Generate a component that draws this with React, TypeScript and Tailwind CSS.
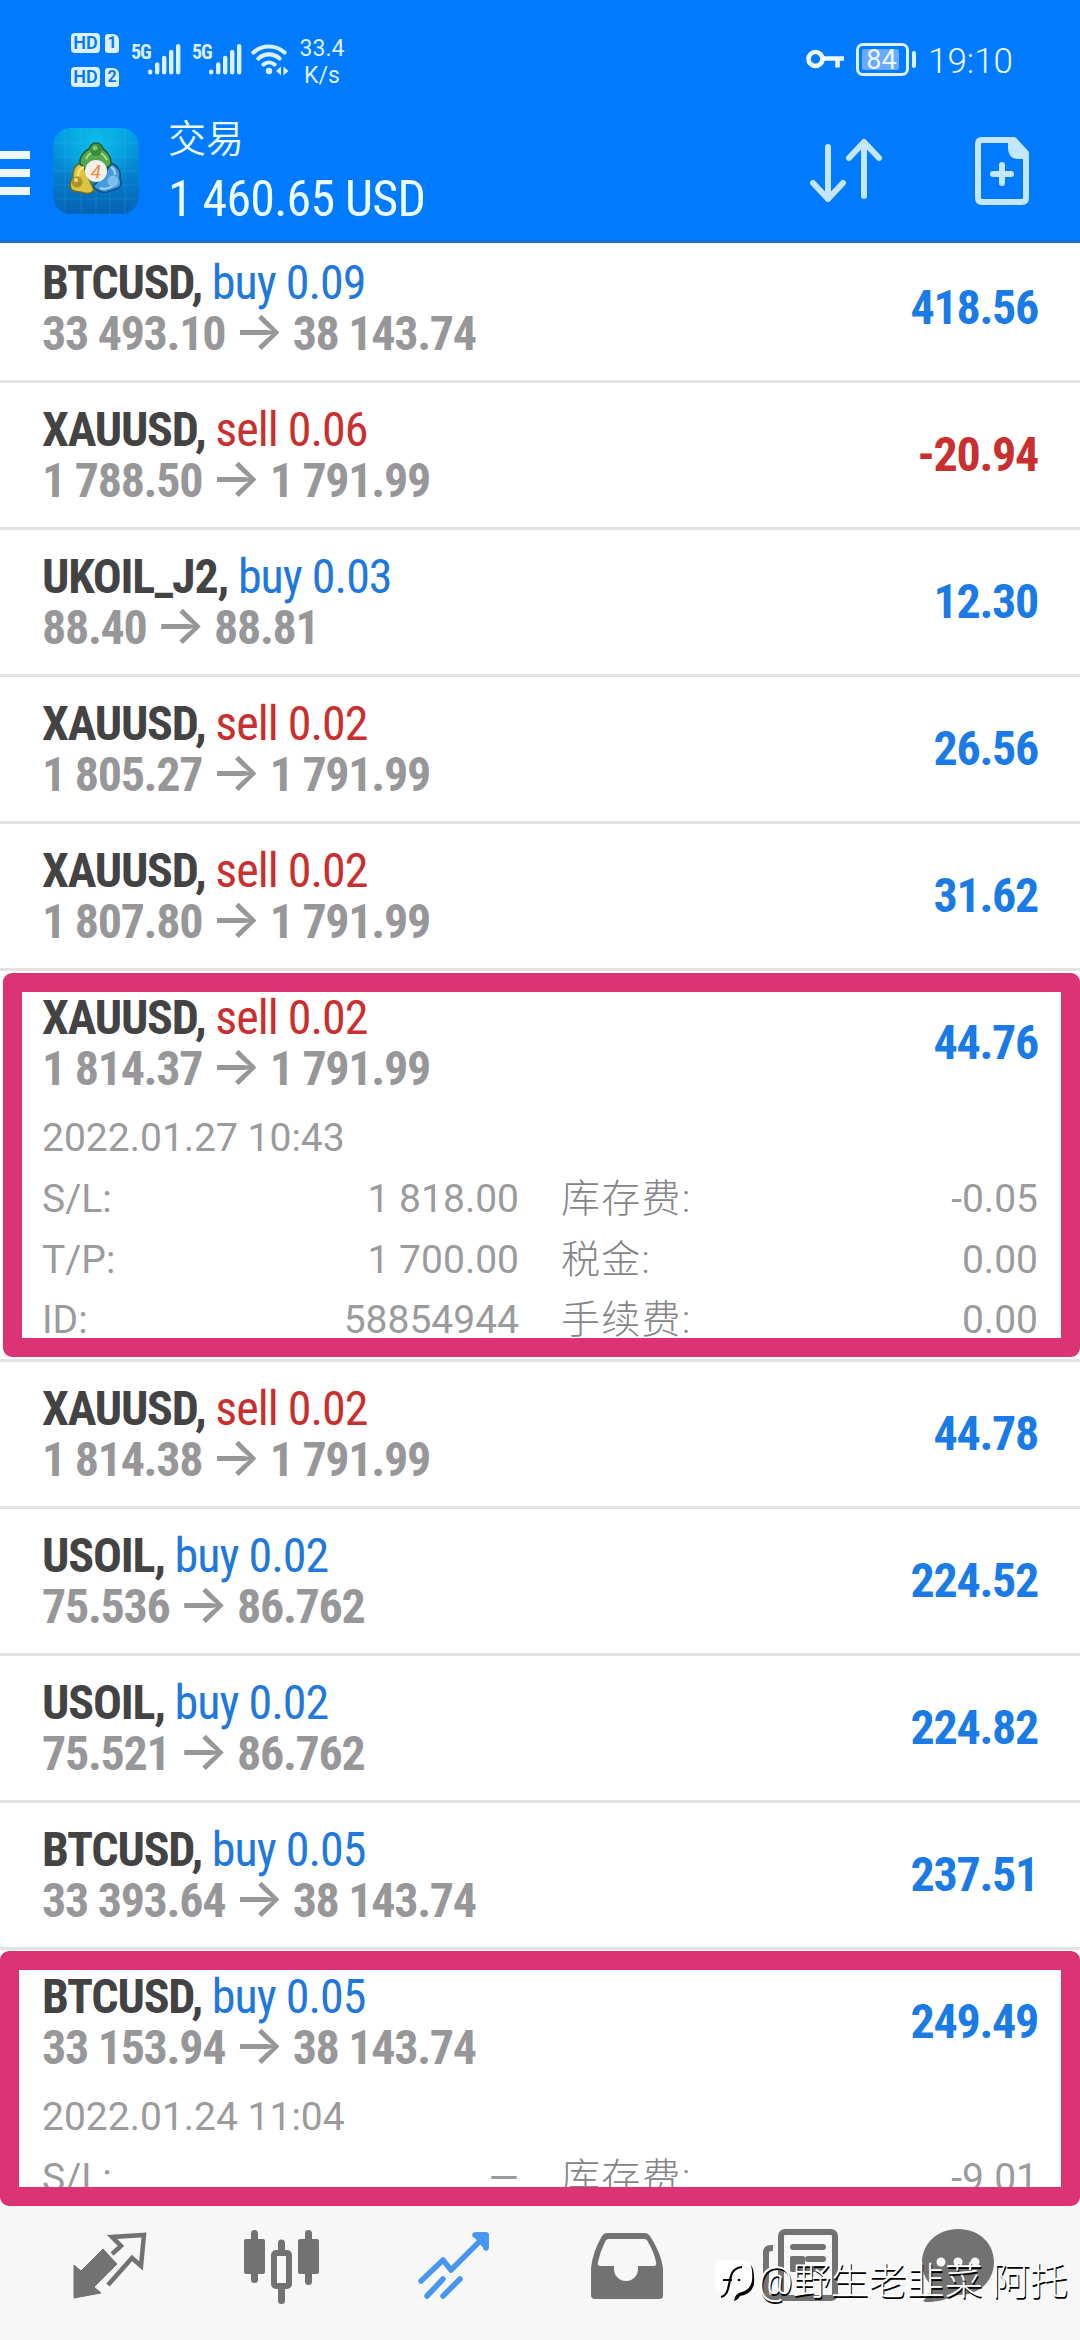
import React from 'react';

type Side = 'buy' | 'sell';

interface Details {
  time: string;
  sl: string;
  tp: string;
  id: string;
  swap: string;
  tax: string;
  fee: string;
}

interface Position {
  symbol: string;
  side: Side;
  lots: string;
  open: string;
  current: string;
  profit: string;
  details?: Details;
}

const positions: Position[] = [
  { symbol: 'BTCUSD', side: 'buy', lots: '0.09', open: '33 493.10', current: '38 143.74', profit: '418.56' },
  { symbol: 'XAUUSD', side: 'sell', lots: '0.06', open: '1 788.50', current: '1 791.99', profit: '-20.94' },
  { symbol: 'UKOIL_J2', side: 'buy', lots: '0.03', open: '88.40', current: '88.81', profit: '12.30' },
  { symbol: 'XAUUSD', side: 'sell', lots: '0.02', open: '1 805.27', current: '1 791.99', profit: '26.56' },
  { symbol: 'XAUUSD', side: 'sell', lots: '0.02', open: '1 807.80', current: '1 791.99', profit: '31.62' },
  {
    symbol: 'XAUUSD', side: 'sell', lots: '0.02', open: '1 814.37', current: '1 791.99', profit: '44.76',
    details: { time: '2022.01.27 10:43', sl: '1 818.00', tp: '1 700.00', id: '58854944', swap: '-0.05', tax: '0.00', fee: '0.00' },
  },
  { symbol: 'XAUUSD', side: 'sell', lots: '0.02', open: '1 814.38', current: '1 791.99', profit: '44.78' },
  { symbol: 'USOIL', side: 'buy', lots: '0.02', open: '75.536', current: '86.762', profit: '224.52' },
  { symbol: 'USOIL', side: 'buy', lots: '0.02', open: '75.521', current: '86.762', profit: '224.82' },
  { symbol: 'BTCUSD', side: 'buy', lots: '0.05', open: '33 393.64', current: '38 143.74', profit: '237.51' },
  {
    symbol: 'BTCUSD', side: 'buy', lots: '0.05', open: '33 153.94', current: '38 143.74', profit: '249.49',
    details: { time: '2022.01.24 11:04', sl: '—', tp: '—', id: '', swap: '-9.01', tax: '', fee: '' },
  },
];

function SimBadge({ slot }: { slot: string }) {
  return (
    <div className="flex items-center gap-[5px] text-[#007aff] font-bold leading-none">
      <span className="w-[29px] h-5 rounded-[4px] bg-[#dcf1ff] flex items-center justify-center text-[18px] font-semibold">HD</span>
      <span className="w-[14px] h-[19px] rounded-[3px] rounded-tr-[6px] bg-[#dcf1ff] flex items-center justify-center text-[16px]">{slot}</span>
    </div>
  );
}

function Signal() {
  return (
    <div className="flex items-start">
      <span className="w-[17px] text-[20px] leading-[18px] font-bold tracking-[-1px] [font-stretch:75%]">5G</span>
      <svg width="33" height="32" viewBox="0 0 33 32" stroke="#dcf1ff" strokeWidth="4.4" strokeLinecap="round">
        <path d="M2.2 28.6v.6M9.2 21.5v7.7M16.2 15v14.2M23.2 9v20.2M30.2 3.2v26" />
      </svg>
    </div>
  );
}

function StatusBar() {
  return (
    <div className="h-[118px] flex items-start pl-[71px] pr-[72px] text-[#dcf1ff]">
      <div className="flex flex-col gap-[14px] mt-[33px]">
        <SimBadge slot="1" />
        <SimBadge slot="2" />
      </div>
      <div className="flex gap-[11px] mt-[43px] ml-3">
        <Signal />
        <Signal />
      </div>
      <svg className="mt-[43px] ml-[9px]" width="38" height="33" viewBox="0 0 38 33" fill="none" stroke="#dcf1ff" strokeWidth="4.2" strokeLinecap="round">
        <path d="M2.5 9.5a23 23 0 0 1 31 0M7.5 15.5a15.5 15.5 0 0 1 21 0M12.5 21.5a8.5 8.5 0 0 1 11 0" />
        <circle cx="18" cy="28" r="3.2" fill="#dcf1ff" stroke="none" />
        <path d="M25 28l5-4.5v9zM37.5 28l-5-4.5v9z" fill="#dcf1ff" stroke="none" />
      </svg>
      <div className="mt-[35px] ml-[9px] w-[48px] text-center text-[23px] leading-[27px]">
        <div>33.4</div>
        <div>K/s</div>
      </div>
      <div className="ml-auto flex items-center mt-[38px] h-[42px]">
        <svg width="39" height="20" viewBox="0 0 39 20" fill="none" stroke="#eefaff" strokeWidth="4.6">
          <circle cx="9.5" cy="10" r="7" />
          <path d="M17 9.500h21M31.5 9v9.500" />
        </svg>
        <div className="relative ml-[11px] w-[53px] h-[33px] rounded-[7px] border-[3px] border-[#dcf1ff] flex items-center justify-center">
          <div className="absolute left-[3px] top-[3px] bottom-[3px] w-[37px] rounded-[2px] bg-[#69a9ff]" />
          <span className="relative pt-[3px] pr-[2px] text-[27px] leading-none text-[#eefaff]">84</span>
        </div>
        <div className="ml-[3px] w-1 h-[17px] rounded-[2px] bg-[#dcf1ff]" />
        <span className="ml-3 mt-[5px] w-[80px] text-[35px] leading-none font-light text-[#eefaff]">19:10</span>
      </div>
    </div>
  );
}

function AppLogo() {
  return (
    <svg width="86" height="86" viewBox="0 0 86 86">
      <defs>
        <linearGradient id="bg" x1="0" y1="0" x2="0" y2="1">
          <stop offset="0" stopColor="#00a0e6" />
          <stop offset="0.5" stopColor="#0583cf" />
          <stop offset="1" stopColor="#0562b4" />
        </linearGradient>
        <radialGradient id="glow" cx="0.5" cy="0.2" r="0.5">
          <stop offset="0" stopColor="#10c8ea" stopOpacity="0.8" />
          <stop offset="1" stopColor="#10c8ea" stopOpacity="0" />
        </radialGradient>
      </defs>
      <rect width="86" height="86" rx="18" fill="url(#bg)" />
      <rect width="86" height="86" rx="18" fill="url(#glow)" />
      <path d="M0 15h86M0 29h86M0 43h86M0 57h86M0 71h86M12 0v86M28 0v86M43 0v86M57 0v86M72 0v86" stroke="#4fc0f0" strokeOpacity="0.2" strokeWidth="1" />
      <g strokeLinejoin="round">
        <path d="M58 35c7 3 10 9 9 16 2 4 1 8-2 9-4 2-7 2-11 4-5 1-11-1-14-6l11-10z" fill="#459bdd" stroke="#124c86" strokeWidth="1.5" />
        <path d="M29 35c-7 1-10 8-9 15-3 3-4 9-1 12 5 3 9 1 12 3 4 1 8 0 10-3l-6-13z" fill="#dcc541" stroke="#6d6a22" strokeWidth="1.5" />
        <path d="M43 15c-4 0-6 3-7 6-6 3-10 9-9 15l8 6h15l8-5c1-7-3-13-8-16-1-4-3-6-7-6z" fill="#55a84c" stroke="#1d5a3a" strokeWidth="1.5" />
      </g>
      <path d="M33 31q3-7 10-7t11 8" fill="none" stroke="#a9dc8c" strokeWidth="2" />
      <path d="M25 48q0-7 6-9" fill="none" stroke="#f7ed8c" strokeWidth="2" />
      <path d="M47 60q6 2 13-2M62 47q0-6-4-8" fill="none" stroke="#a8dbfa" strokeWidth="2" />
      <circle cx="43" cy="22" r="6" fill="#3c8c3e" />
      <circle cx="42" cy="20" r="2.5" fill="#7fc873" />
      <circle cx="24" cy="54" r="5.5" fill="#ad9128" />
      <circle cx="23" cy="52" r="2" fill="#eee07c" />
      <circle cx="60" cy="53" r="5.5" fill="#7dbdf0" />
      <circle cx="43" cy="43" r="11" fill="#f5efec" />
      <text x="43" y="49.5" textAnchor="middle" fontSize="19" fontStyle="italic" fill="#f08a3c">4</text>
    </svg>
  );
}

function Header() {
  return (
    <header className="h-[243px] shrink-0 bg-[#007aff] border-b-[3px] border-[#1a6fcb]">
      <StatusBar />
      <div className="flex items-start h-[122px]">
        <div className="flex flex-col gap-[10px] mt-[33px] w-[30px]">
          <div className="h-2 bg-[#ecfaff]" />
          <div className="h-2 bg-[#ecfaff]" />
          <div className="h-2 bg-[#ecfaff]" />
        </div>
        <div className="ml-[23px] mt-[10px]">
          <AppLogo />
        </div>
        <div className="ml-[29px] text-[#ecfcff] whitespace-nowrap">
          <div className="text-[38px] leading-[40px] mt-[1px]">
            <span className="font-[350]">交易</span>
          </div>
          <div className="text-[50px] leading-[58px] mt-[11px] tracking-[-0.8px] [font-stretch:75%]">1 460.65 USD</div>
        </div>
        <svg className="ml-auto mt-[19px]" width="76" height="68" viewBox="0 0 76 68" fill="none" stroke="#c4e6ff" strokeWidth="6" strokeLinecap="round" strokeLinejoin="round">
          <path d="M19 10v52M4 46l15 16 15-16M55 59V6M40 21L55 5l15 16" />
        </svg>
        <svg className="ml-[90px] mr-[51px] mt-[19px]" width="54" height="68" viewBox="0 0 54 68" fill="none" stroke="#c4e6ff" strokeWidth="6">
          <path d="M6 3h33l12 13v45q0 4-4 4H7q-4 0-4-4V7q0-4 4-4z" strokeLinejoin="round" />
          <path d="M33 4v7q0 10 9 11h9V14L41 4z" fill="#c4e6ff" stroke="none" />
          <path d="M27 28v18M18 37h18" strokeLinecap="round" />
        </svg>
      </div>
    </header>
  );
}

function DetailRow({ label, value }: { label: string; value: string }) {
  return (
    <div className="flex justify-between h-[60.5px]">
      <span>{label}</span>
      <span>{value}</span>
    </div>
  );
}

function CostRow({ label, value }: { label: string; value: string }) {
  return (
    <div className="flex justify-between h-[60.5px]">
      <span className="font-light tracking-[1.3px] text-[#858587]">{label}</span>
      <span>{value}</span>
    </div>
  );
}

function PositionDetails({ details }: { details: Details }) {
  return (
    <div className="pt-[7px] text-[39px] leading-[46px] text-[#9b9b9d]">
      <div className="h-[61px]">{details.time}</div>
      <div className="grid grid-cols-2 gap-x-[42px]">
        <DetailRow label="S/L:" value={details.sl} />
        <CostRow label="库存费:" value={details.swap} />
        <DetailRow label="T/P:" value={details.tp} />
        <CostRow label="税金:" value={details.tax} />
        <DetailRow label="ID:" value={details.id} />
        <CostRow label="手续费:" value={details.fee} />
      </div>
    </div>
  );
}

function PositionRow({ position }: { position: Position }) {
  const { symbol, side, lots, open, current, profit, details } = position;
  const sideColor = side === 'buy' ? 'text-[#1f78dc]' : 'text-[#c92f2f]';
  const profitColor = profit.startsWith('-') ? 'text-[#c92f2f]' : 'text-[#1a7ae6]';

  return (
    <div className={`shrink-0 px-[42px] border-b-[3px] border-[#e3e3e4] ${details ? 'h-[391px]' : 'h-[147px]'}`}>
      <div className="flex justify-between h-[137px] pt-[21px] text-[48px] leading-[51px] font-bold [font-stretch:75%] whitespace-nowrap">
        <div>
          <div className="text-[#434343] tracking-[-1.2px]">
            {symbol}, <span className={`font-normal tracking-[-1px] ${sideColor}`}>{side} {lots}</span>
          </div>
          <div className="text-[#97979a] tracking-[-1.3px]">
            {open}{' '}
            <span className="relative inline-flex justify-center w-[48px] font-[Inter] font-medium text-[54px] leading-[0] tracking-normal">→</span>
            {' '}{current}
          </div>
        </div>
        <div className={`mt-[25px] tracking-[-1.3px] ${profitColor}`}>{profit}</div>
      </div>
      {details && <PositionDetails details={details} />}
    </div>
  );
}

function TabBar() {
  return (
    <nav className="h-[134px] shrink-0 bg-[#f7f7f7] px-6 pt-[15px] grid grid-cols-6 justify-items-center text-[#727272]">
      <svg width="96" height="96" viewBox="0 0 96 96" fill="none" stroke="currentColor">
        <path d="M12 44l7 6 22-22 14 15-23 23 7 6-27 5z" fill="currentColor" strokeLinejoin="round" />
        <path d="M50 33l9-8-9-9 32-2-3 31-9-8-24 27" strokeWidth="4.5" strokeMiterlimit="8" />
      </svg>
      <svg width="96" height="96" viewBox="0 0 96 96" fill="none" stroke="currentColor" strokeWidth="7" strokeLinecap="round">
        <path d="M20.5 12.5v46M47.5 22v15M47.5 66v13.5M74.5 12.5v48" />
        <rect x="10" y="18" width="21" height="35" rx="2" fill="currentColor" stroke="none" />
        <rect x="64" y="18" width="21" height="35" rx="2" fill="currentColor" stroke="none" />
        <rect x="40" y="32" width="15" height="33" rx="2" fill="#f7f7f7" strokeWidth="6" />
      </svg>
      <svg width="96" height="96" viewBox="0 0 96 96" fill="none" stroke="#4797ee" strokeWidth="5.5" strokeLinecap="round" strokeLinejoin="round">
        <path d="M15 60l22-21 8 10 35-35M69 14h11v13M21 75l16-17M37 75l17-17" />
        <path d="M70 14h10v12z" fill="#4797ee" />
      </svg>
      <svg width="96" height="96" viewBox="0 0 96 96" fill="currentColor">
        <path fillRule="evenodd" d="M29 12h38q3 0 5 3 11 17 13 32v28q0 3-4 3H17q-4 0-4-4V47Q15 30 24 15q2-3 5-3zM31 18q-3 0-4 3-5 10-7 20-1 4 2 4h14v3a12 12 0 0 0 24 0v-3h16q3 0 2-4-2-10-8-20-1-3-4-3z" />
      </svg>
      <svg width="96" height="96" viewBox="0 0 96 96" fill="none" stroke="currentColor" strokeWidth="6">
        <rect x="31" y="11" width="54" height="66" rx="4" />
        <path d="M23 27h-2q-5 0-5 5v40q0 5 5 5h20" />
        <path d="M43 26h30M58 38h15M58 48h15" strokeLinecap="round" />
        <rect x="40" y="35" width="15" height="16" rx="2" fill="currentColor" stroke="none" />
      </svg>
      <svg width="96" height="96" viewBox="0 0 96 96" fill="currentColor">
        <path d="M36 8c21 0 36 14 36 33S57 74 37 74c-8 0-12 5-21 6-6 1-17 2-14-1 5-4 6-9 6-16C3 57 0 50 0 42 0 22 16 8 36 8z" />
        <g fill="#f7f7f7">
          <circle cx="19" cy="41" r="4.5" />
          <circle cx="36" cy="41" r="4.5" />
          <circle cx="53" cy="41" r="4.5" />
        </g>
      </svg>
    </nav>
  );
}

function Watermark() {
  return (
    <div className="absolute left-[714px] top-[2256px] flex items-center text-white whitespace-nowrap">
      <svg width="42" height="50" viewBox="0 0 42 50">
        <path d="M11 4h18q9 0 9 10v12q0 9-9 11l-9 5-1-5h-8Q1 37 1 28V14Q1 4 11 4z" fill="#fff" />
        <path d="M7 41q5-1 7-8l3-13q2-8 11-9M9 24h9" fill="none" stroke="#000" strokeWidth="2.2" />
        <path d="M36 8q3 4 2 17-2 9-10 11-7 1-8 9 4-1 6-5 12-2 14-12 1-15-4-20z" fill="#000" />
        <circle cx="25" cy="24" r="1.3" fill="#000" />
      </svg>
      <span className="ml-[2px] text-[38px] leading-[50px] font-light [text-shadow:1px_1.5px_0_#000]">@野生老韭菜 阿托</span>
    </div>
  );
}

export default function App() {
  return (
    <div className="relative w-[1080px] h-[2340px] overflow-hidden flex flex-col bg-white font-[Roboto,'Noto_Sans_CJK_SC',sans-serif]">
      <Header />
      <main className="flex-1 min-h-0 overflow-hidden">
        <div className="-mt-[7px] flex flex-col">
          {positions.map((position, i) => (
            <PositionRow key={i} position={position} />
          ))}
        </div>
      </main>
      <TabBar />
      {/* hand-drawn highlights over the expanded positions */}
      <div className="absolute left-[3px] top-[973px] w-[1077px] h-[384px] border-[19px] border-[#dc3374] rounded-[9px]" />
      <div className="absolute left-0 top-[1951px] w-[1080px] h-[255px] border-[19px] border-[#dc3374] rounded-[9px]" />
      <Watermark />
    </div>
  );
}
